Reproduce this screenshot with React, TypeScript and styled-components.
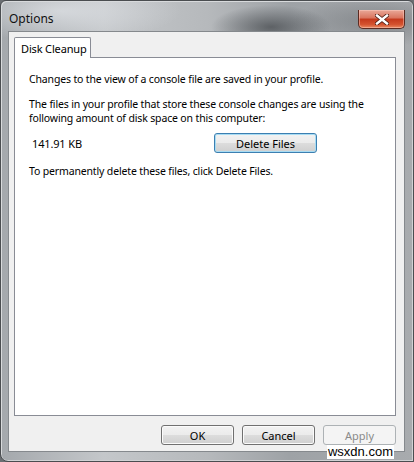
import React from 'react';
import styled, { createGlobalStyle } from 'styled-components';

const Global = createGlobalStyle`
  html, body {
    margin: 0;
    padding: 0;
    background: #6a6e72;
  }
  body {
    font-family: "Noto Sans", "DejaVu Sans", sans-serif;
    font-size: 10.5px;
    letter-spacing: -0.15px;
    color: #000;
  }
`;

const Window = styled.div`
  position: relative;
  width: 414px;
  height: 462px;
  box-sizing: border-box;
  padding: 0 8px 9px 7px;
  display: flex;
  flex-direction: column;
  border-radius: 6px 6px 0 8px;
  border: 1px solid #4a4d50;
  background:
    radial-gradient(ellipse 60px 22px at 270px 26px, rgba(70, 74, 78, 0.75), rgba(70, 74, 78, 0) 100%),
    radial-gradient(ellipse 120px 30px at 60px 10px, rgba(225, 228, 232, 0.7), rgba(225, 228, 232, 0) 100%),
    radial-gradient(ellipse 90px 25px at 380px 20px, rgba(110, 114, 118, 0.6), rgba(110, 114, 118, 0) 100%),
    linear-gradient(90deg, #a4a8ac 0%, #c4c7ca 25%, #b6b9bc 50%, #9ea2a6 70%, #a8abae 100%);
  box-shadow: inset 1px 1px 0 #d8dadc, inset -1px -1px 0 #d0d2d4;
`;

const TitleBar = styled.div`
  height: 30px;
  display: flex;
  align-items: flex-start;
  justify-content: space-between;
`;

const Title = styled.span`
  margin-top: 9px;
  margin-left: 1px;
  font-size: 12px;
  letter-spacing: 0;
  color: #111;
`;

const CloseButton = styled.div`
  width: 47px;
  height: 19px;
  margin-top: 9px;
  box-sizing: border-box;
  border: 1px solid #5b2b22;
  border-top: none;
  border-radius: 0 0 5px 5px;
  background: linear-gradient(180deg, #e9a898 0%, #d9735d 45%, #c4381c 50%, #d4522f 80%, #e98a62 100%);
  box-shadow: inset 0 0 0 1px rgba(255, 210, 200, 0.45);
  display: flex;
  align-items: center;
  justify-content: center;
`;

const Client = styled.div`
  flex: 1;
  box-sizing: border-box;
  border: 1px solid #85898d;
  background: #f0f0f0;
  padding: 5px 8px 0 5px;
  display: flex;
  flex-direction: column;
`;

const TabStrip = styled.div`
  display: flex;
  height: 21px;
  position: relative;
  z-index: 1;
`;

const Tab = styled.div`
  width: 77px;
  height: 21px;
  box-sizing: border-box;
  border: 1px solid #898c95;
  border-bottom: none;
  border-radius: 2px 2px 0 0;
  background: #fff;
  padding: 3px 0 0 6px;
  font-size: 11px;
`;

const Panel = styled.div`
  height: 359px;
  margin-top: -1px;
  box-sizing: border-box;
  border: 1px solid #898c95;
  background: #fff;
  padding: 14px 14px;
`;

const Para = styled.p`
  margin: 0 0 11px;
  line-height: 14px;
`;

const SizeRow = styled.div`
  display: flex;
  align-items: center;
  margin: -3px 0 11px 3px;
  height: 20px;
`;

const SizeLabel = styled.span`
  width: 182px;
  font-size: 11px;
`;

const Button = styled.button<{ $default?: boolean; $disabled?: boolean }>`
  width: ${(p) => (p.$default ? '103px' : '73px')};
  height: 20px;
  box-sizing: border-box;
  padding: 0;
  font-family: "Noto Sans", sans-serif;
  font-size: 11px;
  color: ${(p) => (p.$disabled ? '#8a8a8a' : '#000')};
  border-radius: 3px;
  border: 1px solid ${(p) => (p.$default ? '#3c7fb1' : p.$disabled ? '#adb2b5' : '#707070')};
  background: ${(p) =>
    p.$disabled
      ? '#f4f4f4'
      : 'linear-gradient(180deg, #f2f2f2 0%, #ebebeb 49%, #dddddd 50%, #cfcfcf 100%)'};
  box-shadow: ${(p) =>
    p.$default ? 'inset 0 0 0 1px #a8dcf3' : p.$disabled ? 'none' : 'inset 0 0 0 1px #fbfbfb'};
`;

const ButtonRow = styled.div`
  display: flex;
  justify-content: flex-end;
  gap: 8px;
  margin-top: 9px;
`;

const Watermark = styled.span`
  position: absolute;
  right: 19px;
  bottom: 2px;
  padding: 0 1px;
  background: #fff;
  font-family: "Liberation Sans", sans-serif;
  font-size: 13px;
  letter-spacing: 0;
  line-height: 14px;
  color: #000;
`;

const CloseIcon = () => (
  <svg width="14" height="11" viewBox="0 0 14 11">
    <path
      d="M2 1.5 L12 9.5 M12 1.5 L2 9.5"
      stroke="#4a1a12"
      strokeWidth="4"
      strokeLinecap="square"
    />
    <path
      d="M2 1.5 L12 9.5 M12 1.5 L2 9.5"
      stroke="#fff"
      strokeWidth="2.4"
      strokeLinecap="square"
    />
  </svg>
);

const App = () => (
  <>
    <Global />
    <Window>
      <TitleBar>
        <Title>Options</Title>
        <CloseButton>
          <CloseIcon />
        </CloseButton>
      </TitleBar>
      <Client>
        <TabStrip>
          <Tab>Disk Cleanup</Tab>
        </TabStrip>
        <Panel>
          <Para>Changes to the view of a console file are saved in your profile.</Para>
          <Para>
            The files in your profile that store these console changes are using the
            following amount of disk space on this computer:
          </Para>
          <SizeRow>
            <SizeLabel>141.91 KB</SizeLabel>
            <Button $default>Delete Files</Button>
          </SizeRow>
          <Para>To permanently delete these files, click Delete Files.</Para>
        </Panel>
        <ButtonRow>
          <Button>OK</Button>
          <Button>Cancel</Button>
          <Button $disabled>Apply</Button>
        </ButtonRow>
      </Client>
      <Watermark>wsxdn.com</Watermark>
    </Window>
  </>
);

export default App;
